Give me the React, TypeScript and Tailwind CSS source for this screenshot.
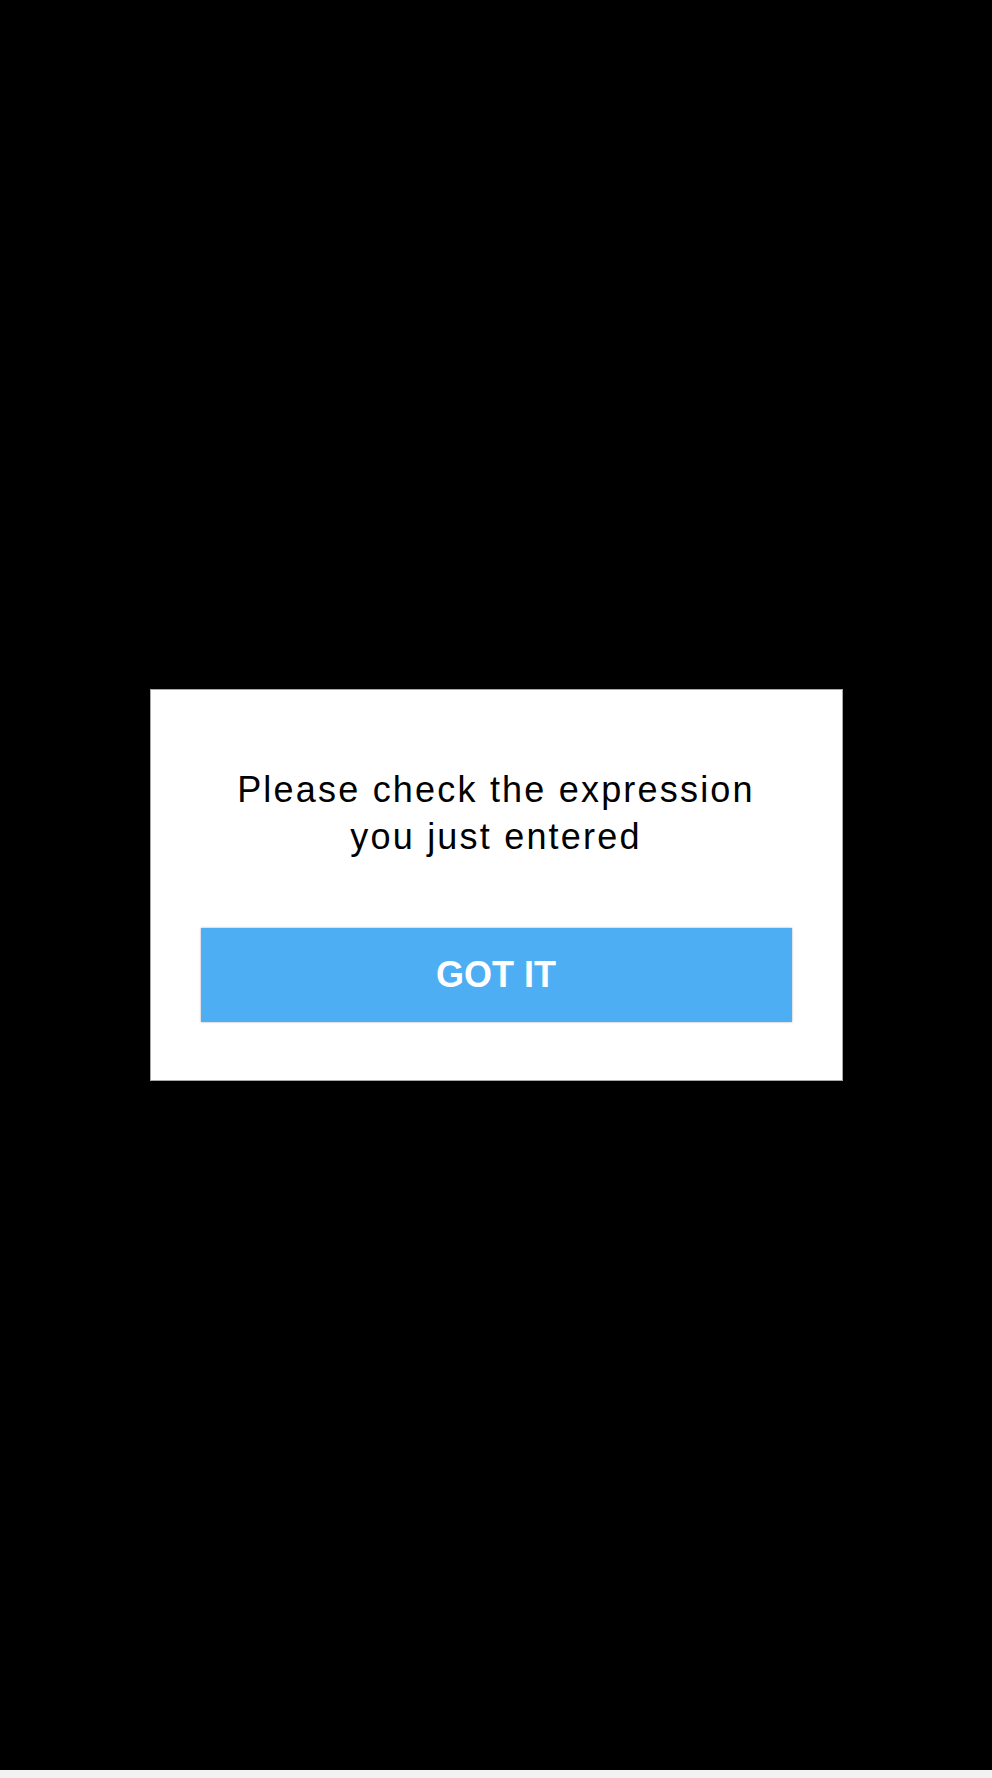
import { useState } from "react";

type AlertDialogProps = {
    message: string;
    actionText: string;
    onAction: () => void;
}

function AlertDialog({ message, actionText, onAction }: AlertDialogProps) {

    return (
        <div className="w-[693px] h-[392px] bg-white border border-[#a8a8a8] flex flex-col items-center pt-[76px] px-[50px]">

            <p className="w-[560px] text-center text-[36px] leading-[47px] tracking-[2.2px] text-black">
                {message}
            </p>

            <button
                type="button"
                onClick={onAction}
                className="mt-[68px] w-full h-[94px] bg-[#4daef4] text-white text-[36px] font-bold flex items-center justify-center shadow-[0_0_2px_rgba(0,0,0,0.35)]">
                {actionText}
            </button>
        </div>
    )
}

export default function App() {

    const [open, setOpen] = useState(true);

    return (
        <div className="w-[992px] h-[1778px] flex flex-col bg-[#f2f2f2] font-['Liberation_Sans',Arial,sans-serif]">
            <div className="h-[1770px] bg-black flex items-center justify-center">
                {open && (
                    <AlertDialog
                        message="Please check the expression you just entered"
                        actionText="GOT IT"
                        onAction={() => setOpen(true)} />
                )}
            </div>
        </div>
    )
}
